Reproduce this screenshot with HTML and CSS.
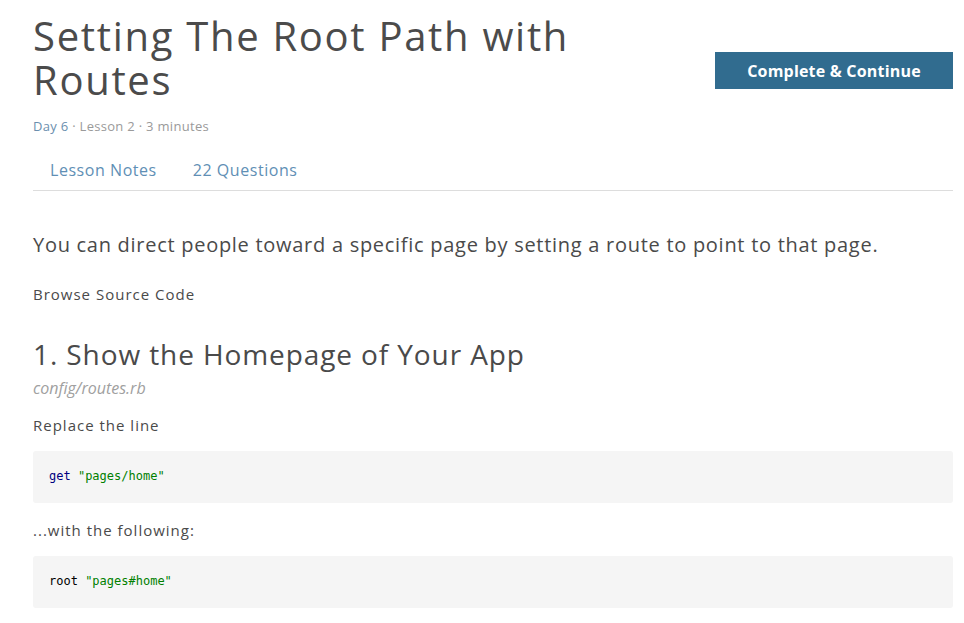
FILE: index.html
```html
<!DOCTYPE html>
<html lang="en">
<head>
<meta charset="utf-8">
<title>Setting The Root Path with Routes</title>
<link rel="stylesheet" href="styles.css">
</head>
<body>
<div class="page">
  <header class="lesson-header">
    <div class="title-block">
      <h1 class="lesson-title">Setting The Root Path with Routes</h1>
      <div class="meta"><span class="meta-day">Day 6</span> · Lesson 2 · 3 minutes</div>
    </div>
    <a class="complete-btn" href="#">Complete &amp; Continue</a>
  </header>
  <nav class="tabs">
    <a class="tab" href="#">Lesson Notes</a>
    <a class="tab" href="#">22 Questions</a>
  </nav>
  <main class="notes">
    <p class="intro">You can direct people toward a specific page by setting a route to point to that page.</p>
    <p class="small">Browse Source Code</p>
    <h2 class="step">1. Show the Homepage of Your App</h2>
    <div class="filename">config/routes.rb</div>
    <p class="small">Replace the line</p>
    <pre class="code"><span class="kw">get</span> <span class="str">"pages/home"</span></pre>
    <p class="small">...with the following:</p>
    <pre class="code"><span class="plain">root</span> <span class="str">"pages#home"</span></pre>
  </main>
</div>
</body>
</html>
```
FILE: styles.css
```css
html, body {
  margin: 0;
  padding: 0;
  background: #ffffff;
}
body {
  font-family: "Open Sans", Lato, Arial, sans-serif;
  color: #4a4a4a;
}
.page {
  width: 920px;
  padding-left: 33px;
  padding-top: 14px;
}
.lesson-header {
  display: flex;
  justify-content: space-between;
  align-items: flex-start;
}
.title-block {
  width: 580px;
}
.lesson-title {
  margin: 0;
  font-size: 40px;
  line-height: 44px;
  font-weight: 400;
  letter-spacing: 1.7px;
  color: #4b4b4b;
}
.meta {
  margin-top: 16px;
  font-size: 13px;
  line-height: 16px;
  letter-spacing: 0.3px;
  color: #9a9a9a;
}
.meta-day {
  color: #6b8fae;
}
.complete-btn {
  margin-top: 38px;
  width: 238px;
  height: 37px;
  display: flex;
  align-items: center;
  justify-content: center;
  background: #316c8f;
  color: #ffffff;
  font-weight: 700;
  font-size: 16px;
  letter-spacing: 0.2px;
  text-decoration: none;
}
.tabs {
  margin-top: 18px;
  display: flex;
  gap: 36px;
  padding-left: 17px;
  padding-top: 7px;
  border-bottom: 1px solid #dddddd;
  height: 31px;
}
.tab {
  font-size: 16px;
  line-height: 22px;
  letter-spacing: 0.55px;
  color: #5f8fb5;
  text-decoration: none;
}
.notes {
  padding-top: 40px;
}
.intro {
  margin: 0;
  font-size: 20px;
  line-height: 28px;
  letter-spacing: 0.72px;
  color: #4a4a4a;
}
.small {
  margin: 0;
  font-size: 15px;
  line-height: 20px;
  letter-spacing: 1px;
  color: #4a4a4a;
}
.intro + .small {
  margin-top: 25px;
}
.step {
  margin: 33px 0 0;
  font-size: 28px;
  line-height: 34px;
  font-weight: 400;
  letter-spacing: 0.9px;
  color: #4a4a4a;
}
.filename {
  margin-top: 7px;
  font-style: italic;
  font-size: 16px;
  line-height: 20px;
  color: #a0a0a0;
}
.filename + .small {
  margin-top: 17px;
}
.code {
  margin: 16px 0 17px;
  background: #f5f5f5;
  border-radius: 3px;
  height: 52px;
  box-sizing: border-box;
  padding: 17px 16px 0;
  font-family: "DejaVu Sans Mono", "Liberation Mono", monospace;
  font-size: 12px;
  line-height: 16px;
  color: #000000;
}
.kw { color: #000080; }
.str { color: #008000; }
.plain { color: #000000; }
```
